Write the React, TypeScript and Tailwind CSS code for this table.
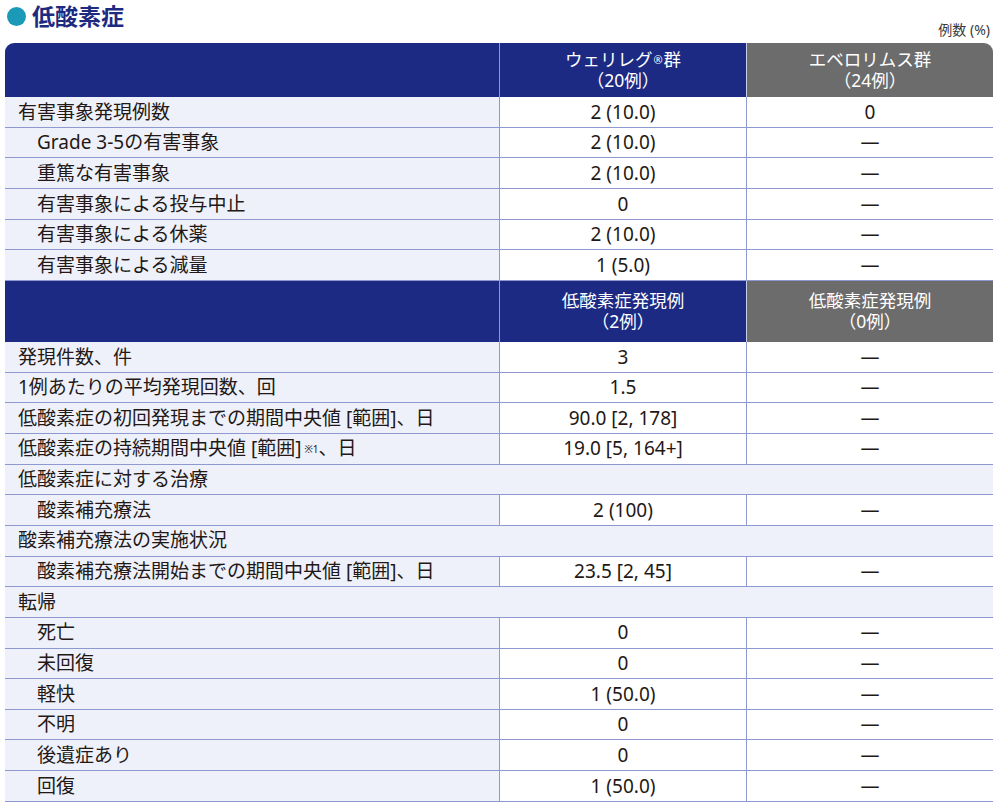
const font = { fontFamily: '"Noto Sans", "Noto Sans CJK JP", sans-serif' }

type Row =
  | { kind: 'data'; label: React.ReactNode; a: string; b: string; indent?: boolean }
  | { kind: 'section'; label: string }
  | { kind: 'head'; a: [React.ReactNode, string]; b: [string, string] }

const rows: Row[] = [
  {
    kind: 'head',
    a: [
      <>
        ウェリレグ<sup className="text-[11px] relative -top-[2px] mx-[1px]">®</sup>群
      </>,
      '（20例）',
    ],
    b: ['エベロリムス群', '（24例）'],
  },
  { kind: 'data', label: '有害事象発現例数', a: '2 (10.0)', b: '0' },
  { kind: 'data', label: 'Grade 3-5の有害事象', a: '2 (10.0)', b: '—', indent: true },
  { kind: 'data', label: '重篤な有害事象', a: '2 (10.0)', b: '—', indent: true },
  { kind: 'data', label: '有害事象による投与中止', a: '0', b: '—', indent: true },
  { kind: 'data', label: '有害事象による休薬', a: '2 (10.0)', b: '—', indent: true },
  { kind: 'data', label: '有害事象による減量', a: '1 (5.0)', b: '—', indent: true },
  { kind: 'head', a: ['低酸素症発現例', '（2例）'], b: ['低酸素症発現例', '（0例）'] },
  { kind: 'data', label: '発現件数、件', a: '3', b: '—' },
  { kind: 'data', label: '1例あたりの平均発現回数、回', a: '1.5', b: '—' },
  { kind: 'data', label: '低酸素症の初回発現までの期間中央値 [範囲]、日', a: '90.0 [2, 178]', b: '—' },
  {
    kind: 'data',
    label: (
      <>
        低酸素症の持続期間中央値 [範囲]<sup className="text-[10px] ml-[3px] relative -top-[2px]">※1</sup>、日
      </>
    ),
    a: '19.0 [5, 164+]',
    b: '—',
  },
  { kind: 'section', label: '低酸素症に対する治療' },
  { kind: 'data', label: '酸素補充療法', a: '2 (100)', b: '—', indent: true },
  { kind: 'section', label: '酸素補充療法の実施状況' },
  { kind: 'data', label: '酸素補充療法開始までの期間中央値 [範囲]、日', a: '23.5 [2, 45]', b: '—', indent: true },
  { kind: 'section', label: '転帰' },
  { kind: 'data', label: '死亡', a: '0', b: '—', indent: true },
  { kind: 'data', label: '未回復', a: '0', b: '—', indent: true },
  { kind: 'data', label: '軽快', a: '1 (50.0)', b: '—', indent: true },
  { kind: 'data', label: '不明', a: '0', b: '—', indent: true },
  { kind: 'data', label: '後遺症あり', a: '0', b: '—', indent: true },
  { kind: 'data', label: '回復', a: '1 (50.0)', b: '—', indent: true },
]

export default function App() {
  let headIdx = 0
  return (
    <div className="w-[1000px] h-[807px] bg-white text-[#231815] overflow-hidden" style={font}>
      {/* Title */}
      <div className="flex items-center gap-[6px] pl-[7px] h-[34px] pb-[2px]">
        <div className="w-[19px] h-[19px] rounded-full bg-[#1b9ab8]" />
        <h1 className="text-[23px] font-bold leading-none text-[#1d2a7f]">低酸素症</h1>
      </div>
      <div className="flex justify-end pr-[10px] h-[9px]">
        <span className="text-[14px] leading-none text-[#3a3a3a] -mt-[11px]">例数 (%)</span>
      </div>

      {/* Table */}
      <div className="ml-[5px] w-[988px] text-[19px]">
        {rows.map((r, i) => {
          if (r.kind === 'head') {
            const first = headIdx++ === 0
            return (
              <div key={i} className={`flex text-white text-[17.5px] leading-[21px] ${first ? 'h-[54px]' : 'h-[61px]'}`}>
                <div className={`w-[495px] bg-[#1c2a84] border-r border-[#8e99cf] ${first ? 'rounded-tl-[9px]' : ''}`} />
                <div className="w-[247px] bg-[#1c2a84] border-r border-[#c9cde6] flex flex-col items-center justify-center">
                  <span>{r.a[0]}</span>
                  <span>{r.a[1]}</span>
                </div>
                <div className={`flex-1 bg-[#6c6c6c] flex flex-col items-center justify-center ${first ? 'rounded-tr-[9px]' : ''}`}>
                  <span>{r.b[0]}</span>
                  <span>{r.b[1]}</span>
                </div>
              </div>
            )
          }
          if (r.kind === 'section') {
            return (
              <div key={i} className="h-[30.67px] bg-[#eef1fa] border-b border-[#8e99cf] flex items-center pl-[13px]">
                {r.label}
              </div>
            )
          }
          return (
            <div key={i} className="h-[30.67px] flex border-b border-[#8e99cf]">
              <div className={`w-[495px] bg-[#eef1fa] border-r border-[#8e99cf] flex items-center ${r.indent ? 'pl-[32px]' : 'pl-[13px]'}`}>
                <span>{r.label}</span>
              </div>
              <div className="w-[247px] border-r border-[#8e99cf] flex items-center justify-center">{r.a}</div>
              <div className="flex-1 flex items-center justify-center">{r.b}</div>
            </div>
          )
        })}
      </div>
    </div>
  )
}
